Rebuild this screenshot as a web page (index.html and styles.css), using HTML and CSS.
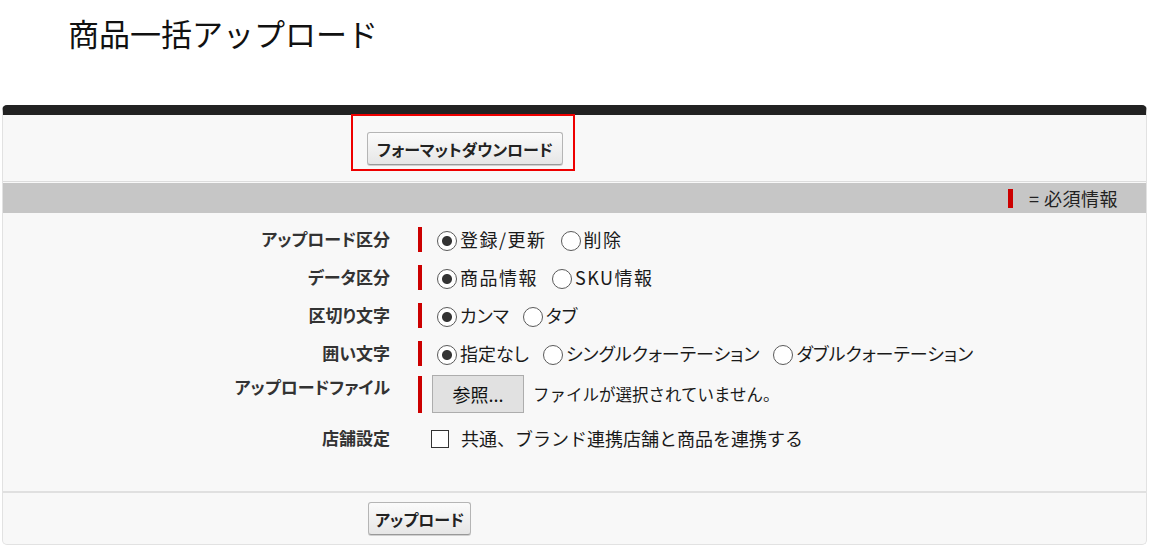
FILE: index.html
```html
<!DOCTYPE html>
<html lang="ja">
<head>
<meta charset="utf-8">
<title>商品一括アップロード</title>
<link rel="stylesheet" href="styles.css">
</head>
<body>
<h1 class="page-title">商品一括アップロード</h1>
<div class="panel">
  <div class="top-section">
    <div class="highlight">
      <button class="btn btn-wide" type="button">フォーマットダウンロード</button>
    </div>
  </div>
  <div class="legend"><span class="req-mark"></span><span class="legend-text">= 必須情報</span></div>
  <div class="form">
    <div class="row">
      <div class="label">アップロード区分</div>
      <div class="req"></div>
      <div class="value">
        <label class="opt"><input type="radio" name="kubun" checked><span class="kanji">登録/更新</span></label>
        <label class="opt"><input type="radio" name="kubun"><span class="kanji">削除</span></label>
      </div>
    </div>
    <div class="row">
      <div class="label">データ区分</div>
      <div class="req"></div>
      <div class="value">
        <label class="opt"><input type="radio" name="data" checked><span class="kanji">商品情報</span></label>
        <label class="opt"><input type="radio" name="data"><span class="kanji">SKU情報</span></label>
      </div>
    </div>
    <div class="row">
      <div class="label">区切り文字</div>
      <div class="req"></div>
      <div class="value">
        <label class="opt"><input type="radio" name="sep" checked>カンマ</label>
        <label class="opt"><input type="radio" name="sep">タブ</label>
      </div>
    </div>
    <div class="row">
      <div class="label">囲い文字</div>
      <div class="req"></div>
      <div class="value">
        <label class="opt"><input type="radio" name="quote" checked>指定なし</label>
        <label class="opt"><input type="radio" name="quote">シングルクォーテーション</label>
        <label class="opt"><input type="radio" name="quote">ダブルクォーテーション</label>
      </div>
    </div>
    <div class="row row-file">
      <div class="label">アップロードファイル</div>
      <div class="req req-tall"></div>
      <div class="value">
        <button class="file-btn" type="button">参照...</button>
        <span class="file-text">ファイルが選択されていません。</span>
      </div>
    </div>
    <div class="row row-check">
      <div class="label">店舗設定</div>
      <div class="req req-none"></div>
      <div class="value">
        <label class="check"><input type="checkbox">共通、ブランド連携店舗と商品を連携する</label>
      </div>
    </div>
  </div>
  <div class="footer">
    <button class="btn" type="button">アップロード</button>
  </div>
</div>
</body>
</html>
```

FILE: styles.css
```css
* { box-sizing: border-box; }

body {
  margin: 0;
  background: #ffffff;
  font-family: "Noto Sans CJK JP", "Noto Sans", sans-serif;
  color: #222;
}

.page-title {
  margin: 0;
  padding: 13px 0 0 68px;
  font-size: 31px;
  line-height: 40px;
  font-weight: normal;
  color: #111;
}

.panel {
  margin: 52px 0 0 2px;
  width: 1145px;
  background: #f8f8f8;
  border: 1px solid #e2e2e2;
  border-top: 10px solid #222;
  border-radius: 5px;
}

.top-section {
  height: 67px;
  border-bottom: 1px solid #dcdcdc;
  display: flex;
  align-items: flex-start;
}

.highlight {
  margin-left: 348px;
  margin-top: -1px;
  border: 2px solid #ee0000;
  padding: 16px 10px 4px 14px;
  display: flex;
}

.btn {
  height: 33px;
  padding: 0 6px;
  font-family: "Noto Sans CJK JP", sans-serif;
  font-feature-settings: "palt";
  font-size: 16px;
  font-weight: bold;
  color: #222;
  background: linear-gradient(#fbfbfb, #e6e6e6);
  border: 1px solid #b5b5b5;
  border-bottom-color: #999;
  border-radius: 3px;
  box-shadow: 0 1px 0 #d0d0d0;
}

.btn-wide {
  padding: 0 9px;
}

.legend {
  margin-top: 1px;
  height: 30px;
  background: #c6c6c6;
  display: flex;
  justify-content: flex-end;
  align-items: center;
  padding-right: 28px;
  gap: 16px;
  font-size: 18px;
  color: #222;
}

.legend-text {
  font-feature-settings: "palt";
  letter-spacing: 0.5px;
}

.req-mark {
  width: 5px;
  height: 19px;
  background: #cc0000;
}

.form {
  padding: 12px 0 40px 0;
  border-bottom: 2px solid #e0e0e0;
  display: flex;
  flex-direction: column;
  gap: 10px;
}

.row {
  display: flex;
  align-items: center;
  height: 28px;
}

.row-file {
  height: 38px;
  margin-top: -2px;
}

.row-check {
  height: 26px;
  margin-top: 2px;
}

.label {
  width: 387px;
  text-align: right;
  font-size: 17px;
  font-weight: bold;
  font-feature-settings: "palt";
  color: #333;
  line-height: 28px;
}

.row-file .label {
  align-self: flex-start;
  line-height: 24px;
}

.req {
  width: 4px;
  height: 25px;
  margin-left: 28px;
  margin-right: 9px;
  background: #cc0000;
}

.req-tall { height: 37px; }
.req-none { background: transparent; }

.value {
  display: flex;
  align-items: center;
  font-size: 18px;
  font-feature-settings: "palt";
  color: #1a1a1a;
}

.opt {
  display: flex;
  align-items: center;
  margin-right: 8px;
}

.kanji {
  letter-spacing: 1.5px;
}

.opt input {
  appearance: none;
  -webkit-appearance: none;
  width: 20px;
  height: 20px;
  margin: 3px 3px 0 6px;
  border: 1px solid #5a5a5a;
  border-radius: 50%;
  background: #fff;
}

.opt input:checked {
  background: radial-gradient(circle, #333 0 4.5px, #fff 5.5px);
}

.file-btn {
  width: 92px;
  height: 38px;
  margin-left: 1px;
  font-family: "Noto Sans CJK JP", sans-serif;
  font-size: 18px;
  color: #111;
  background: #e1e1e1;
  border: 1px solid #adadad;
  border-radius: 0;
}

.file-text {
  margin-left: 9px;
  font-size: 16.5px;
  font-feature-settings: normal;
}

.check {
  display: flex;
  align-items: center;
  font-size: 18px;
  font-feature-settings: normal;
}

.check input {
  appearance: none;
  -webkit-appearance: none;
  width: 18px;
  height: 18px;
  margin: 2px 12px 0 0;
  border: 1px solid #333;
  background: #fff;
  border-radius: 0;
}

.footer {
  padding: 9px 0 9px 365px;
  display: flex;
}
```
